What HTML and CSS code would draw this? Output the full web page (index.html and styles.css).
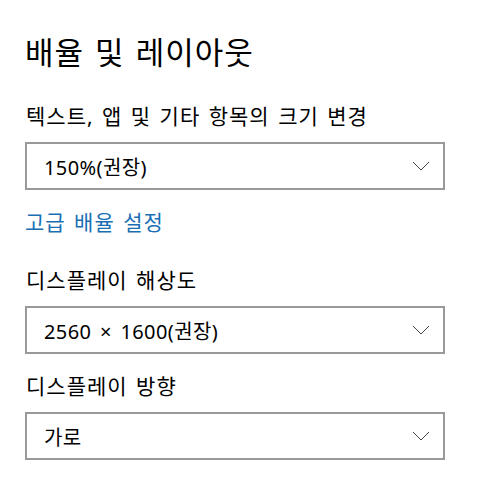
FILE: index.html
```html
<!DOCTYPE html>
<html lang="ko">
<head>
<meta charset="utf-8">
<link rel="stylesheet" href="styles.css">
</head>
<body>
<main class="page">
  <h1 class="title">배율 및 레이아웃</h1>
  <div class="label label-first">텍스트, 앱 및 기타 항목의 크기 변경</div>
  <div class="select">
    <span class="value">150%(권장)</span>
    <svg class="chev" width="18" height="10" viewBox="0 0 18 10"><path d="M1 1 L9 9 L17 1" fill="none" stroke="#444" stroke-width="1"/></svg>
  </div>
  <a class="link">고급 배율 설정</a>
  <div class="label label-res">디스플레이 해상도</div>
  <div class="select">
    <span class="value">2560 × 1600(권장)</span>
    <svg class="chev" width="18" height="10" viewBox="0 0 18 10"><path d="M1 1 L9 9 L17 1" fill="none" stroke="#444" stroke-width="1"/></svg>
  </div>
  <div class="label label-ori">디스플레이 방향</div>
  <div class="select">
    <span class="value">가로</span>
    <svg class="chev" width="18" height="10" viewBox="0 0 18 10"><path d="M1 1 L9 9 L17 1" fill="none" stroke="#444" stroke-width="1"/></svg>
  </div>
</main>
</body>
</html>
```
FILE: styles.css
```css
html, body {
  margin: 0;
  padding: 0;
  background: #fff;
}
.page {
  font-family: "Noto Sans", "Noto Sans CJK KR", sans-serif;
  color: #000;
  padding: 30px 0 0 25px;
  display: flex;
  flex-direction: column;
  align-items: flex-start;
}
.title {
  font-size: 31px;
  font-weight: 400;
  line-height: 44px;
  letter-spacing: 1px;
  word-spacing: 2px;
  margin: 0;
}
.label {
  font-size: 21px;
  line-height: 26px;
  letter-spacing: 1px;
  word-spacing: 2px;
  color: #000;
  margin-left: 1px;
}
.label-first { margin-top: 29px; }
.label-res { margin-top: 32px; }
.label-ori { margin-top: 19px; }
.select {
  box-sizing: border-box;
  width: 420px;
  height: 48px;
  border: 2px solid #999;
  margin-top: 13px;
  display: flex;
  align-items: center;
  justify-content: space-between;
  padding: 0 13px 0 17px;
}
.value {
  font-size: 20px;
  letter-spacing: 0.4px;
  word-spacing: 3px;
  color: #000;
}
.chev { display: block; }
.link {
  font-size: 21px;
  line-height: 26px;
  letter-spacing: 1px;
  word-spacing: 2px;
  color: #1a6fb4;
  margin-top: 19px;
}
```
